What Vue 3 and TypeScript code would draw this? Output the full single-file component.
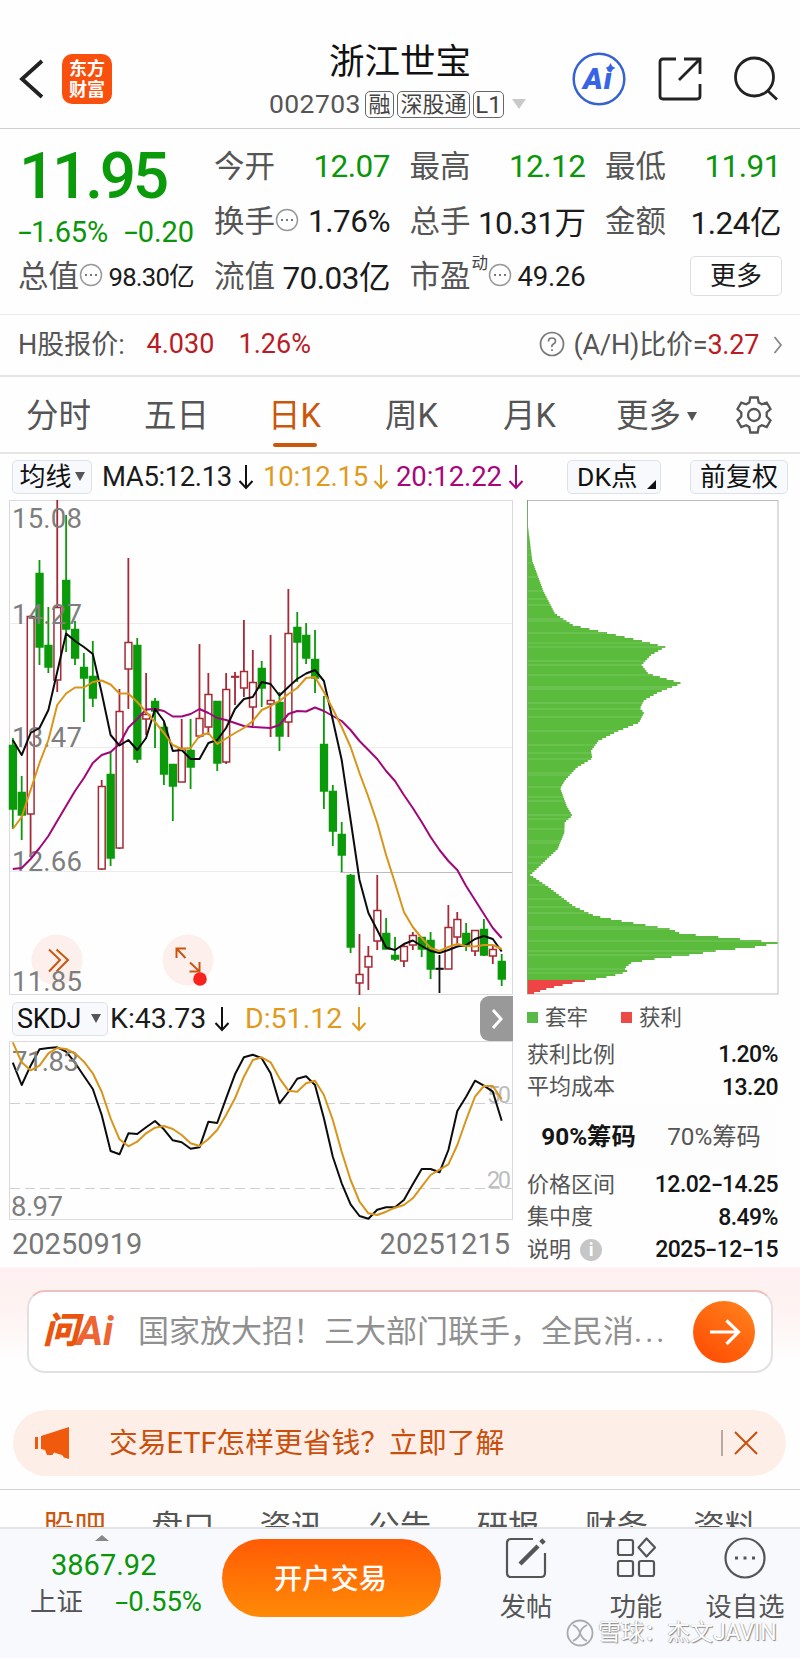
<script setup lang="ts">
type Candle = [number, number, number, number, 'r' | 'g' | 'k']

// high, body top, body bottom, low, colour
const candles: Candle[] = [
  [738, 745, 809, 829, 'g'], [776, 792, 815, 840, 'g'], [615, 616, 814, 855, 'r'], [560, 573, 647, 665, 'g'],
  [607, 645, 667, 673, 'g'], [500, 607, 680, 692, 'r'], [515, 580, 629, 652, 'g'], [621, 629, 658, 665, 'g'],
  [653, 667, 678, 722, 'g'], [641, 676, 698, 707, 'g'], [780, 786, 869, 870, 'r'], [752, 774, 858, 866, 'g'],
  [689, 711, 848, 849, 'r'], [558, 642, 669, 709, 'r'], [638, 645, 759, 763, 'g'], [673, 714, 719, 735, 'r'],
  [698, 701, 711, 748, 'g'], [722, 727, 774, 785, 'g'], [764, 764, 786, 821, 'g'], [719, 748, 782, 782, 'r'],
  [719, 750, 767, 789, 'g'], [644, 718, 736, 738, 'r'], [673, 694, 727, 735, 'r'], [701, 701, 763, 771, 'g'],
  [673, 689, 762, 764, 'r'], [672, 676, 677, 705, 'r'], [620, 671, 688, 697, 'r'], [650, 682, 707, 726, 'r'],
  [661, 668, 688, 707, 'g'], [635, 700, 704, 737, 'r'], [692, 702, 736, 751, 'g'], [589, 633, 722, 737, 'r'],
  [612, 627, 642, 682, 'g'], [623, 635, 658, 664, 'g'], [630, 659, 678, 693, 'g'], [696, 744, 791, 809, 'g'],
  [785, 791, 831, 846, 'g'], [822, 834, 855, 872, 'g'], [874, 875, 947, 953, 'g'], [934, 974, 983, 995, 'r'],
  [946, 956, 967, 990, 'r'], [875, 910, 941, 950, 'r'], [918, 933, 949, 949, 'g'], [937, 955, 959, 961, 'g'],
  [945, 946, 961, 967, 'r'], [932, 935, 945, 950, 'r'], [937, 937, 949, 957, 'g'], [932, 940, 969, 979, 'g'],
  [955, 968, 969, 993, 'k'], [905, 927, 969, 969, 'r'], [912, 919, 937, 945, 'r'], [923, 933, 946, 951, 'g'],
  [930, 930, 951, 956, 'r'], [919, 929, 955, 956, 'g'], [945, 949, 956, 964, 'r'], [954, 961, 979, 986, 'g'],
]
const ma5 = [740, 755, 733, 728, 710, 672, 633.5, 641, 647, 654, 693, 735, 745.5, 740, 750, 738, 709, 721, 751, 750, 759, 759, 743, 740, 728, 709, 699, 697, 682, 684, 695.5, 687, 679, 673.5, 670, 681, 720, 760, 820, 880, 913, 930, 947.5, 950, 944, 940.5, 946, 951, 953, 950, 946.5, 945, 939, 936, 939, 951.5]
const ma10 = [829, 817, 790, 763, 740, 705, 693.5, 687.5, 687.5, 682, 680.5, 684.5, 693.5, 693.5, 702, 712, 722, 733, 745, 749, 748, 736, 733, 744, 738.5, 733, 728, 721, 710, 706, 701, 694, 688, 678, 677, 692, 709, 727, 747, 773, 797, 823, 855, 883, 912, 927, 938, 948, 951, 947, 944, 946, 946.5, 945, 945, 949]
const ma20 = [869, 868, 859, 848, 836, 821, 806, 791, 778, 763, 755, 752, 744, 727.5, 719, 709.5, 709, 711, 716.5, 716.5, 714, 709, 713, 718, 720, 723, 726, 727, 727.5, 728, 725, 714, 711, 711.5, 707.5, 711, 716, 721, 730, 741, 750, 759, 771, 781, 795, 808, 822, 837, 850, 861, 870, 886, 900, 914, 928, 938]
const lineK = [203, 270, 212, 163, 159, 157, 170, 203, 243, 282, 360, 468, 478, 415, 417, 397, 378, 403, 436, 442, 461, 457, 380, 384, 310, 238, 187, 179, 190, 235, 325, 291, 251, 244, 270, 370, 485, 565, 628, 663, 671, 644, 637, 637, 615, 568, 522, 522, 532, 465, 348, 305, 257, 272, 290, 377]
const lineD = [142, 202, 226, 212, 175, 159, 162, 175, 200, 235, 290, 370, 433, 454, 440, 415, 398, 393, 402, 420, 445, 453, 432, 405, 360, 310, 245, 195, 187, 202, 250, 287, 290, 265, 257, 300, 375, 470, 555, 620, 655, 660, 650, 638, 630, 610, 575, 540, 524, 508, 450, 375, 305, 273, 273, 313]

const cx = (i: number): number => 12.8 + i * 8.889
const toPoints = (ys: number[]): string => ys.map((y, i) => `${cx(i).toFixed(1)},${y.toFixed(1)}`).join(' ')
const toSk = (ys: number[]): string => toPoints(ys.map((v) => 995 + v / 3))
const ink: Record<string, string> = { r: '#a52a35', g: '#0a9a0a', k: '#111' }

// distribution outline, [width, depth] in thirds of a pixel
const outline: [number, number][] = [
  [0, 0], [1, 60], [16, 180], [49, 270], [84, 338], [139, 373], [249, 398], [354, 422], [415, 438], [372, 462],
  [344, 492], [364, 518], [464, 547], [394, 574], [351, 598], [339, 622], [351, 635], [336, 665], [269, 692],
  [214, 720], [192, 750], [196, 772], [149, 800], [114, 838], [100, 862], [119, 915], [136, 944], [113, 964],
  [112, 995], [92, 1044], [56, 1078], [10, 1122], [64, 1158], [139, 1215], [204, 1245], [289, 1261], [434, 1285],
  [461, 1298], [574, 1308], [714, 1321], [752, 1326], [684, 1338], [566, 1350], [496, 1361], [389, 1373],
  [314, 1385], [292, 1402], [302, 1412], [254, 1425], [186, 1438], [124, 1448], [64, 1462], [24, 1475], [2, 1483],
]
function widthAt(d: number): number {
  for (let i = 1; i < outline.length; i++) {
    const [w0, d0] = outline[i - 1]
    const [w1, d1] = outline[i]
    if (d <= d1) return w0 + ((w1 - w0) * (d - d0)) / (d1 - d0)
  }
  return 0
}
const bars = Array.from({ length: 247 }, (_, i) => ({
  y: 500 + i * 2,
  w: Math.max(0.6, widthAt(i * 6) / 3),
  c: i >= 240 ? '#ef4444' : i % 7 === 3 || i % 11 === 5 ? '#67c14c' : '#5abb3c',
}))

const periods = ['分时', '五日', '日K', '周K', '月K', '更多']
const feeds = ['股吧', '盘口', '资讯', '公告', '研报', '财务', '资料']
</script>

<template>
  <div class="page">
    <header class="top">
      <svg class="back" viewBox="0 0 30 46"><path d="M24 5 L4 23 L24 41" /></svg>
      <div class="logo"><span>东方</span><span>财富</span></div>
      <div class="title">
        <h1>浙江世宝</h1>
        <div class="sub">
          <span class="code">002703</span><i>融</i><i class="wide">深股通</i><i class="lv">L1</i><b class="tri"></b>
        </div>
      </div>
      <div class="acts">
        <svg width="54" height="54" viewBox="0 0 54 54">
          <circle cx="27" cy="27" r="25.3" fill="#fff" stroke="#3763cf" stroke-width="2.5" />
          <text x="11" y="37" class="ai">Ai</text>
          <path d="M38.500 11l1.700 3.300 3.300 1.700-3.300 1.700-1.700 3.300-1.700-3.300-3.300-1.700 3.300-1.700z" fill="#3763e6" />
        </svg>
        <svg width="46" height="46" viewBox="0 0 46 46" class="ln">
          <path d="M19 3H6Q3 3 3 6V40Q3 43 6 43H40Q43 43 43 40V28M27 3H43V18M43 3L22 24" />
        </svg>
        <svg width="46" height="46" viewBox="0 0 46 46" class="ln">
          <circle cx="21.500" cy="21" r="19" /><path d="M35 35L44 43.500" />
        </svg>
      </div>
    </header>

    <section class="quote">
      <div class="main">
        <div class="price">11.95</div>
        <div class="chg"><span><u>-</u>1.65%</span><span><u>-</u>0.20</span></div>
        <div class="cell small">
          <label>总值</label><svg class="dots" viewBox="0 0 24 24"><circle cx="12" cy="12" r="10.500" /><path d="M6 12h2M11 12h2M16 12h2" /></svg><span class="unit">98.30亿</span>
        </div>
      </div>
      <div class="cells">
        <div class="cell"><label>今开</label><span class="g">12.07</span></div>
        <div class="cell"><label>最高</label><span class="g">12.12</span></div>
        <div class="cell"><label>最低</label><span class="g">11.91</span></div>
        <div class="cell"><label>换手</label><svg class="dots" viewBox="0 0 24 24"><circle cx="12" cy="12" r="10.500" /><path d="M6 12h2M11 12h2M16 12h2" /></svg><span>1.76%</span></div>
        <div class="cell"><label>总手</label><span class="unit">10.31万</span></div>
        <div class="cell"><label>金额</label><span class="unit">1.24亿</span></div>
        <div class="cell"><label>流值</label><span class="unit">70.03亿</span></div>
        <div class="cell pe"><label>市盈</label><sup>动</sup><svg class="dots" viewBox="0 0 24 24"><circle cx="12" cy="12" r="10.500" /><path d="M6 12h2M11 12h2M16 12h2" /></svg><span>49.26</span></div>
        <div class="cell"><button class="more">更多</button></div>
      </div>
    </section>

    <section class="hk">
      <span class="hl">H股报价:</span><span class="r a">4.030</span><span class="r b">1.26%</span>
      <svg class="q" viewBox="0 0 26 26"><circle cx="13" cy="13" r="11.500" /><path d="M9.500 10.500Q9.500 7 13 7T16.500 10.300Q16.500 12 14.500 13T13 16M13 18.200V20" /></svg>
      <span class="ratio">(A/H)比价=<em>3.27</em></span>
      <svg class="chev" viewBox="0 0 10 18"><path d="M1.500 1L8 9L1.500 17" /></svg>
    </section>

    <nav class="periods">
      <span v-for="(p, i) in periods" :key="p" :class="['p' + i, { on: i === 2 }]">{{ p }}<b v-if="i === 5" class="dn"></b></span>
      <svg class="gear" viewBox="0 0 40 40">
        <path d="M16.300 2.500H23.700L24.700 7.500L27.800 9.300L32.700 7.600L36.500 14L32.700 17.400V21.600L36.500 25.500L32.700 32L27.800 30.200L24.700 32L23.700 37.500H16.300L15.300 32L12.200 30.200L7.300 32L3.500 25.500L7.300 21.600V17.400L3.500 14L7.300 7.600L12.200 9.300L15.300 7.500Z" />
        <circle cx="20" cy="20" r="6" />
      </svg>
    </nav>

    <section class="ma">
      <span class="box m1">均线<b class="dn"></b></span>
      <span class="t1">MA5:12.13</span><svg class="arr" viewBox="0 0 16 26"><path d="M8 1V24M1.500 17L8 24L14.500 17" /></svg>
      <span class="t2">10:12.15</span><svg class="arr o" viewBox="0 0 16 26"><path d="M8 1V24M1.500 17L8 24L14.500 17" /></svg>
      <span class="t3">20:12.22</span><svg class="arr p" viewBox="0 0 16 26"><path d="M8 1V24M1.500 17L8 24L14.500 17" /></svg>
      <span class="box m2">DK点<b class="corner"></b></span>
      <span class="box m3">前复权</span>
    </section>

    <section class="charts">
      <div class="left">
        <svg class="kline" width="520" height="498" viewBox="0 498 520 498">
          <g class="grid">
            <path d="M9.500 623.500H512M9.500 747.500H512M9.500 871.500H345" stroke="#ececec" />
            <path d="M340 872.500H512" stroke="#bcbcbc" />
            <rect x="9.500" y="500.500" width="503" height="494" fill="none" stroke="#d9d9de" />
          </g>
          <circle cx="57" cy="960" r="25.500" fill="#fdefec" />
          <circle cx="188" cy="960" r="25.500" fill="#fdefec" />
          <path d="M49 949.500L60 960L49 971.500M56.500 949.500L68 960L56.500 971.500" class="brown" />
          <path d="M176.500 958V948.500H186M177 949L185.500 958M199.500 962V971.500H189.500M190 962.500L199 971" class="brown" />
          <circle cx="200" cy="979" r="6.800" fill="#f5221d" />
          <g v-for="(c, i) in candles" :key="i" :stroke="ink[c[4]]">
            <path :d="`M${cx(i)} ${c[0]}V${c[1]}M${cx(i)} ${c[2]}V${c[3]}`" stroke-width="1.800" />
            <rect :x="cx(i) - 3.3" :y="c[1] + 0.500" width="6.800" :height="Math.max(0.600, c[2] - c[1] - 0.500)" :fill="c[4] === 'g' ? '#0a9a0a' : '#fff'" stroke-width="1.500" />
          </g>
          <g class="lab">
            <text x="12" y="527.500" textLength="70">15.08</text>
            <text x="12" y="623.500" textLength="70">14.27</text>
            <text x="12" y="747" textLength="70">13.47</text>
            <text x="12" y="870.500" textLength="70">12.66</text>
            <text x="12" y="991" textLength="70">11.85</text>
          </g>
          <polyline :points="toPoints(ma20)" class="ln20" />
          <polyline :points="toPoints(ma5)" class="ln5" />
          <polyline :points="toPoints(ma10)" class="ln10" />
        </svg>
        <div class="sk">
          <span class="box s1">SKDJ<b class="dn"></b></span>
          <span class="t1">K:43.73</span><svg class="arr" viewBox="0 0 16 26"><path d="M8 1V24M1.500 17L8 24L14.500 17" /></svg>
          <span class="t2">D:51.12</span><svg class="arr o" viewBox="0 0 16 26"><path d="M8 1V24M1.500 17L8 24L14.500 17" /></svg>
          <span class="next"><svg width="14" height="22" viewBox="0 0 14 22"><path d="M3 2L11 11L3 20" fill="none" stroke="#fff" stroke-width="3" /></svg></span>
        </div>
        <svg class="kd" width="520" height="180" viewBox="0 1041 520 180">
          <rect x="9.500" y="1041.500" width="503" height="178" fill="none" stroke="#d9d9de" />
          <path d="M10 1103.500H512M10 1188.500H512" stroke="#cfcfcf" stroke-dasharray="10 5" />
          <g class="lim">
            <text x="487" y="1103" textLength="24">50</text>
            <text x="487" y="1188" textLength="24">20</text>
          </g>
          <polyline :points="toSk(lineK)" class="ln5" />
          <g class="lab">
            <text x="12" y="1070.500" textLength="67">71.83</text>
            <text x="11" y="1216" textLength="52">8.97</text>
          </g>
          <polyline :points="toSk(lineD)" class="ln10" />
        </svg>
        <div class="dates"><span>20250919</span><span>20251215</span></div>
      </div>

      <div class="chips">
        <svg width="252" height="498" viewBox="527 498 252 498">
          <rect x="527.500" y="500.500" width="250.500" height="493.500" fill="#fff" stroke="#bdbdbd" />
          <rect v-for="b in bars" :key="b.y" x="527" :y="b.y" :width="b.w" height="2" :fill="b.c" />
          <path d="M527.500 500.500V994" stroke="#77a96c" />
        </svg>
        <div class="legend"><b class="sg"></b><span>套牢</span><b class="sr"></b><span>获利</span></div>
        <div class="row"><span>获利比例</span><strong>1.20%</strong></div>
        <div class="row"><span>平均成本</span><strong>13.20</strong></div>
        <div class="seg"><strong>90%筹码</strong><span>70%筹码</span></div>
        <div class="row"><span>价格区间</span><strong>12.02<u>-</u>14.25</strong></div>
        <div class="row"><span>集中度</span><strong>8.49%</strong></div>
        <div class="row"><span>说明</span><b class="info">i</b><strong>2025<u>-</u>12<u>-</u>15</strong></div>
      </div>
    </section>

    <section class="ask">
      <div class="card">
        <span class="ask-logo">问<em>Ai</em></span>
        <span class="ask-text">国家放大招！三大部门联手，全民消<em>...</em></span>
        <svg width="62" height="62" viewBox="0 0 62 62">
          <defs><linearGradient id="go" x1="0" y1="1" x2="0.700" y2="0"><stop offset="0.200" stop-color="#ff5206" /><stop offset="1" stop-color="#ff7d1a" /></linearGradient></defs>
          <circle cx="31" cy="31" r="31" fill="url(#go)" />
          <path d="M17 31H45M33.500 19.500L45.500 31L33.500 43" fill="none" stroke="#fff" stroke-width="3.200" />
        </svg>
      </div>
    </section>

    <div class="banner">
      <svg width="36" height="32" viewBox="0 0 36 32" fill="#ef5a0c"><path d="M0 10h3v12H0zM6 9L34 0V32L29 30.500L27 28L19 25.500L17.500 28H12L10 23L6 22Z" /></svg>
      <span class="btxt">交易ETF怎样更省钱？立即了解</span>
      <i></i>
      <svg width="24" height="24" viewBox="0 0 24 24"><path d="M1 1L23 23M23 1L1 23" stroke="#c9500c" stroke-width="2" /></svg>
    </div>

    <nav class="feeds"><span v-for="(f, i) in feeds" :key="f" :class="{ on: i === 0 }">{{ f }}</span></nav>

    <footer class="bar">
      <div class="index">
        <b class="up"></b>
        <div class="n1">3867.92</div>
        <div class="n2"><span>上证</span><em><u>-</u>0.55%</em></div>
      </div>
      <button class="trade">开户交易</button>
      <div class="tool t-a">
        <svg width="44" height="44" viewBox="0 0 44 44" class="ln2"><path d="M29 3H7Q3 3 3 7V37Q3 41 7 41H37Q41 41 41 37V17" /><path d="M16 28L34 10" stroke-width="4.500" /><path d="M37 7L40 4" stroke-width="5" /></svg>
        <span>发帖</span>
      </div>
      <div class="tool t-b">
        <svg width="44" height="44" viewBox="0 0 44 44" class="ln2"><rect x="4" y="4" width="15" height="15" rx="2" /><rect x="4" y="25" width="15" height="15" rx="2" /><rect x="25" y="25" width="15" height="15" rx="2" /><path d="M32.500 2.500L41 11.500L32.500 20.500L24.500 11.500Z" stroke-linejoin="round" /></svg>
        <span>功能</span>
      </div>
      <div class="tool t-c">
        <svg width="44" height="44" viewBox="0 0 44 44" class="ln2"><circle cx="22" cy="22" r="19.500" /><path d="M12 22h3M20.500 22h3M29 22h3" stroke-width="3" /></svg>
        <span>设自选</span>
      </div>
      <div class="mark">
        <svg width="28" height="28" viewBox="0 0 28 28"><circle cx="14" cy="14" r="12.500" /><path d="M7 6Q12 8 14 14T21 22M21 6Q15 9 14 14T7 22" /></svg>
        <span>雪球：杰文JAVIN</span>
      </div>
    </footer>
  </div>
</template>

<style>
body { background: #fefefe; }
</style>

<style scoped>
.page { width: 800px; height: 1658px; overflow: hidden; background: #fefefe; color: #1b1b1b; font-family: Roboto, "Noto Sans CJK SC", sans-serif; white-space: nowrap; display: flex; flex-direction: column; }
.page > * { box-sizing: border-box; flex: none; }
svg { display: block; flex: none; }
.kline, .kd { overflow: visible; }
i, em { font-style: normal; }
u { text-decoration: none; display: inline-block; transform: scaleX(1.7); margin: 0 2.5px; }
h1 { margin: 0; font-weight: 400; }
button { font-family: inherit; padding: 0; }
b { flex: none; }

.top { height: 129px; border-bottom: 1px solid #cfcfcf; display: flex; align-items: flex-start; position: relative; }
.back { width: 30px; height: 46px; margin: 56px 0 0 18px; }
.back path { fill: none; stroke: #222; stroke-width: 3.8; }
.logo { width: 50px; height: 50px; margin: 54px 0 0 14px; border-radius: 10px; background: #f9500d; color: #fff; font-size: 18px; font-weight: 700; line-height: 21px; display: flex; flex-direction: column; align-items: center; justify-content: center; }
.title { width: 300px; margin: 40px 0 0 138px; display: flex; flex-direction: column; align-items: center; }
.title h1 { font-size: 35.5px; line-height: 44px; color: #111; }
.sub { display: flex; align-items: center; height: 28px; margin-top: 6px; width: 262px; }
.code { font-size: 26.5px; color: #555; width: 96px; letter-spacing: 0.4px; line-height: 26px; margin-top: -1px; }
.sub i { height: 27px; width: 29px; box-sizing: border-box; border: 1.3px solid #666; border-radius: 5px; font-size: 22px; line-height: 25px; color: #444; text-align: center; margin-right: 3px; }
.sub i.wide { width: 73px; }
.sub i.lv { width: 31px; font-size: 24px; line-height: 26px; }
.tri { border: 7.5px solid transparent; border-top: 10px solid #c9c9c9; border-bottom: 0; margin-left: 5px; }
.acts { display: flex; align-items: center; height: 54px; margin: 52px 0 0 22px; gap: 30.5px; }
.ai { font: italic 900 30px Roboto; fill: #3763e6; letter-spacing: 1px; }
.ln { fill: none; stroke: #222; stroke-width: 2.8; }

.quote { height: 186px; border-bottom: 1px solid #ebebeb; padding: 10px 19px 0 18px; display: flex; gap: 20px; }
.main { width: 177px; }
.price { color: #0a9a0a; font-weight: 500; font-size: 64px; line-height: 75px; height: 72px; letter-spacing: -3.3px; margin-left: 1px; }
.chg { display: flex; justify-content: space-between; height: 38px; line-height: 42px; font-size: 29px; color: #0a960a; letter-spacing: -0.1px; }
.cells { flex: 1; display: grid; grid-template-columns: repeat(3, 176px); column-gap: 19.5px; grid-auto-rows: 55px; }
.cell { display: flex; align-items: center; height: 55px; font-size: 31.5px; }
.cell label { font-size: 30.500px; color: #555; margin-top: -5px; }
.cell > span { margin-left: auto; letter-spacing: -0.5px; }
.cell > .unit { margin-top: -4px; }
.g { color: #0a960a; }
.dots { width: 24px; height: 24px; margin-left: 0; margin-top: -4px; }
.dots circle { fill: none; stroke: #999; stroke-width: 1.500; }
.dots path { stroke: #777; stroke-width: 2; }
.small > span { font-size: 25.7px; }
.small > span { letter-spacing: -0.8px; }
.pe > span { font-size: 27.5px; letter-spacing: -0.2px; }
.pe sup { font-size: 16.500px; align-self: flex-start; line-height: 20px; margin: 5px 0 0 1px; color: #444; }
.pe .dots { margin-left: 0; }
.more { width: 92px; height: 40px; margin-left: auto; margin-right: -1px; border: 1px solid #dedee2; border-radius: 5px; background: #fff; font-size: 26px; color: #1b1b1b; line-height: 36px; margin-top: -1px; }

.hk { height: 62px; border-bottom: 2px solid #e5e5e5; display: flex; align-items: center; padding: 0 0 4px 18px; font-size: 27px; color: #555; }
.r, .ratio em { color: #b91c25; }
.r { margin-top: 2px; }
.hl { width: 128.5px; margin-top: -1px; } .a { width: 92px; } .b { width: 300px; }
.q { width: 26px; height: 26px; margin-top: 2px; }
.q circle, .q path { fill: none; stroke: #777; stroke-width: 1.700; }
.ratio { margin: -2px 0 0 9px; width: 187px; letter-spacing: -0.2px; }
.chev { width: 10px; height: 18px; margin: 3px 0 0 12px; fill: none; stroke: #888; stroke-width: 1.800; }

.periods { height: 77px; border-bottom: 2px solid #e5e5e5; display: grid; grid-template-columns: 118px 124px 117px 118px 113px 131px 40px; padding-left: 26px; align-items: center; font-size: 32.5px; color: #555; }
.periods span { position: relative; display: flex; align-items: center; line-height: 75px; padding-top: 3px; height: 72px; }
.periods .on { color: #cb570d; }
.periods .on::after { content: ""; position: absolute; left: 5px; bottom: 5px; width: 44px; height: 4.500px; border-radius: 2px; background: #cb570d; }
.dn { border: 5px solid transparent; border-top: 9px solid #555; border-bottom: 0; margin-left: 6px; }
.gear { width: 40px; height: 40px; fill: none; stroke: #555; stroke-width: 2.300; margin-left: -13px; }

.ma { height: 44px; display: flex; align-items: center; padding: 1px 0 0 12px; font-size: 27.500px; }
.box { box-sizing: border-box; height: 34px; border: 1px solid #dfe1e8; border-radius: 5px; background: #f8f9fc; font-size: 26px; line-height: 30px; display: flex; align-items: center; justify-content: center; color: #111; }
.m1 { width: 80px; margin-right: 10px; }
.m1 .dn { margin-left: 3px; }
.t1, .t2, .t3 { flex: none; }
.ma .t1 { width: 136px; letter-spacing: -0.4px; } .ma .t2 { width: 110px; margin-left: 9px; letter-spacing: -0.2px; } .ma .t3 { width: 112px; margin-left: 7px; letter-spacing: -0.1px; }
.t2 { color: #e09a1e; } .t3 { color: #a8067c; }
.arr { width: 16px; height: 26px; fill: none; stroke: #111; stroke-width: 2; }
.arr.o { stroke: #e09a1e; } .arr.p { stroke: #a8067c; }
.m2 { width: 94px; margin-left: 43px; justify-content: flex-start; padding-left: 9px; position: relative; font-size: 26.5px; }
.corner { position: absolute; right: 4px; bottom: 4px; border-left: 9px solid transparent; border-bottom: 9px solid #111; }
.m3 { width: 98px; margin-left: 29px; }

.charts { display: flex; height: 769px; }
.left { width: 527px; }
.brown { fill: none; stroke: #c9560f; stroke-width: 2; }
.lab { font-size: 27.500px; fill: #7e7e7e; }
.lim { font-size: 23.5px; fill: #bdbdbd; }
.ln5, .ln10, .ln20 { fill: none; stroke-width: 2; stroke-linejoin: round; }
.ln5 { stroke: #0c0c0c; } .ln10 { stroke: #d9941a; } .ln20 { stroke: #a0087a; }
.sk { height: 45px; display: flex; align-items: center; padding-left: 12px; font-size: 28.5px; }
.s1 { width: 96px; margin-right: 2px; font-size: 27px; letter-spacing: -0.4px; justify-content: flex-start; padding-left: 4px; }
.s1 .dn { margin-left: 10px; }
.sk .t1 { width: 104px; } .sk .t2 { width: 106px; margin-left: 15px; }
.next { width: 33px; height: 45px; margin-left: 113px; background: #999; border-radius: 9px 0 0 9px; display: flex; align-items: center; justify-content: center; }
.dates { display: flex; justify-content: space-between; padding: 0 17px 0 12px; height: 46px; line-height: 46px; font-size: 29px; color: #777; }
.chips { width: 251px; }
.legend { display: flex; align-items: center; height: 43px; font-size: 21.500px; color: #555; }
.legend b { width: 11px; height: 11px; } .sg { background: #58b947; } .sr { background: #ec4a45; }
.legend span { margin-left: 7px; line-height: 30px; } .legend .sr { margin-left: 33px; }
.row { height: 32.500px; display: flex; align-items: center; font-size: 22px; color: #555; line-height: 30px; }
.row > span { margin-top: -1px; }
.row strong { margin-left: auto; font-weight: 500; color: #151515; font-size: 23px; letter-spacing: -0.55px; }
.row u { transform: scaleX(1.5); margin: 0 2px; }
.seg { height: 65px; box-sizing: border-box; padding-bottom: 4px; display: flex; align-items: center; font-size: 24.3px; color: #555; background: #fefdfe; }
.seg strong { width: 123px; text-align: center; font-weight: 700; color: #151515; letter-spacing: 0; } .seg span { flex: 1; text-align: center; }
.info { width: 22px; height: 22px; border-radius: 50%; background: #c6c6c6; color: #fff; font-size: 18px; line-height: 22px; text-align: center; margin-left: 9px; }

.ask { height: 143px; background: linear-gradient(#fef0f0 0, #fef3f2 45px, #fefefe 95px); padding: 23px 27px 0; }
.card { box-sizing: border-box; height: 83px; border: 2px solid #e3e0e2; border-top-color: #edc0bb; border-radius: 18px; background: #fff; display: flex; align-items: center; padding: 0 16px 0 14px; }
.ask-logo { width: 95px; font-size: 36px; font-weight: 900; font-style: italic; color: #e9550e; display: flex; align-items: center; letter-spacing: -2px; line-height: 46px; margin-top: -1px; }
.ask-logo em { color: #ee6432; font-style: italic; font-size: 40px; letter-spacing: 0; font-weight: 700; padding-top: 2px; }
.ask-text { font-size: 31px; color: #909090; flex: 1; line-height: 40px; margin-top: 1px; }
.ask-text em { letter-spacing: 3px; }
.banner { height: 66px; margin: 0 14px 13px 13px; border-radius: 33px; background: #feeee8; display: flex; align-items: center; padding-left: 22px; }
.btxt { font-size: 28.800px; color: #c9500c; width: 612px; margin-left: 38px; font-weight: 400; margin-top: -5px; }
.banner i { width: 1.500px; height: 26px; background: #b9a9a2; margin-right: 11px; }
.feeds { height: 38px; border-top: 1px solid #d2d2d2; overflow: hidden; display: flex; padding: 13px 0 0 43px; font-size: 31.5px; line-height: 49px; color: #555; }
.feeds span { width: 108.400px; flex: none; } .feeds .on { color: #cb570d; }

.bar { height: 131px; border-top: 2px solid #e4e5e8; background: #f7f9fd; display: flex; align-items: flex-start; position: relative; }
.index { width: 222px; }
.up { display: block; width: 0; border: 7px solid transparent; border-bottom: 6px solid #888; border-top: 0; margin: 6px 0 0 95px; }
.n1 { margin: 4px 0 0 51px; font-size: 29px; line-height: 40px; color: #0a960a; letter-spacing: 0; }
.n2 { display: flex; margin-left: 30px; font-size: 26.5px; line-height: 33px; color: #555; width: 172px; justify-content: space-between; }
.n2 em { color: #0a960a; font-size: 27.5px; }
.trade { width: 219px; height: 78px; margin-top: 10px; border: 0; border-radius: 39px; background: linear-gradient(#ff5b05, #ff8a06); color: #fff; font-size: 28.300px; font-weight: 500; padding: 0 2px 3px 0; }
.tool { width: 80px; display: flex; flex-direction: column; align-items: center; margin-top: 7px; font-size: 26.300px; line-height: 38px; color: #555; }
.tool span { margin-top: 8px; }
.t-a { margin-left: 45px; } .t-b { margin-left: 30px; } .t-c { margin-left: 29px; }
.ln2 { fill: none; stroke: #555; stroke-width: 2.200; }
.mark { position: absolute; left: 566px; top: 87px; display: flex; align-items: center; font-size: 23px; color: #fff; line-height: 34px; }
.mark span { margin-left: 4px; text-shadow: 1px 1px 1px #888, -0.500px -0.500px 1px #aaa; }
.mark svg { fill: none; stroke: #aaa; stroke-width: 1.800; }
</style>
